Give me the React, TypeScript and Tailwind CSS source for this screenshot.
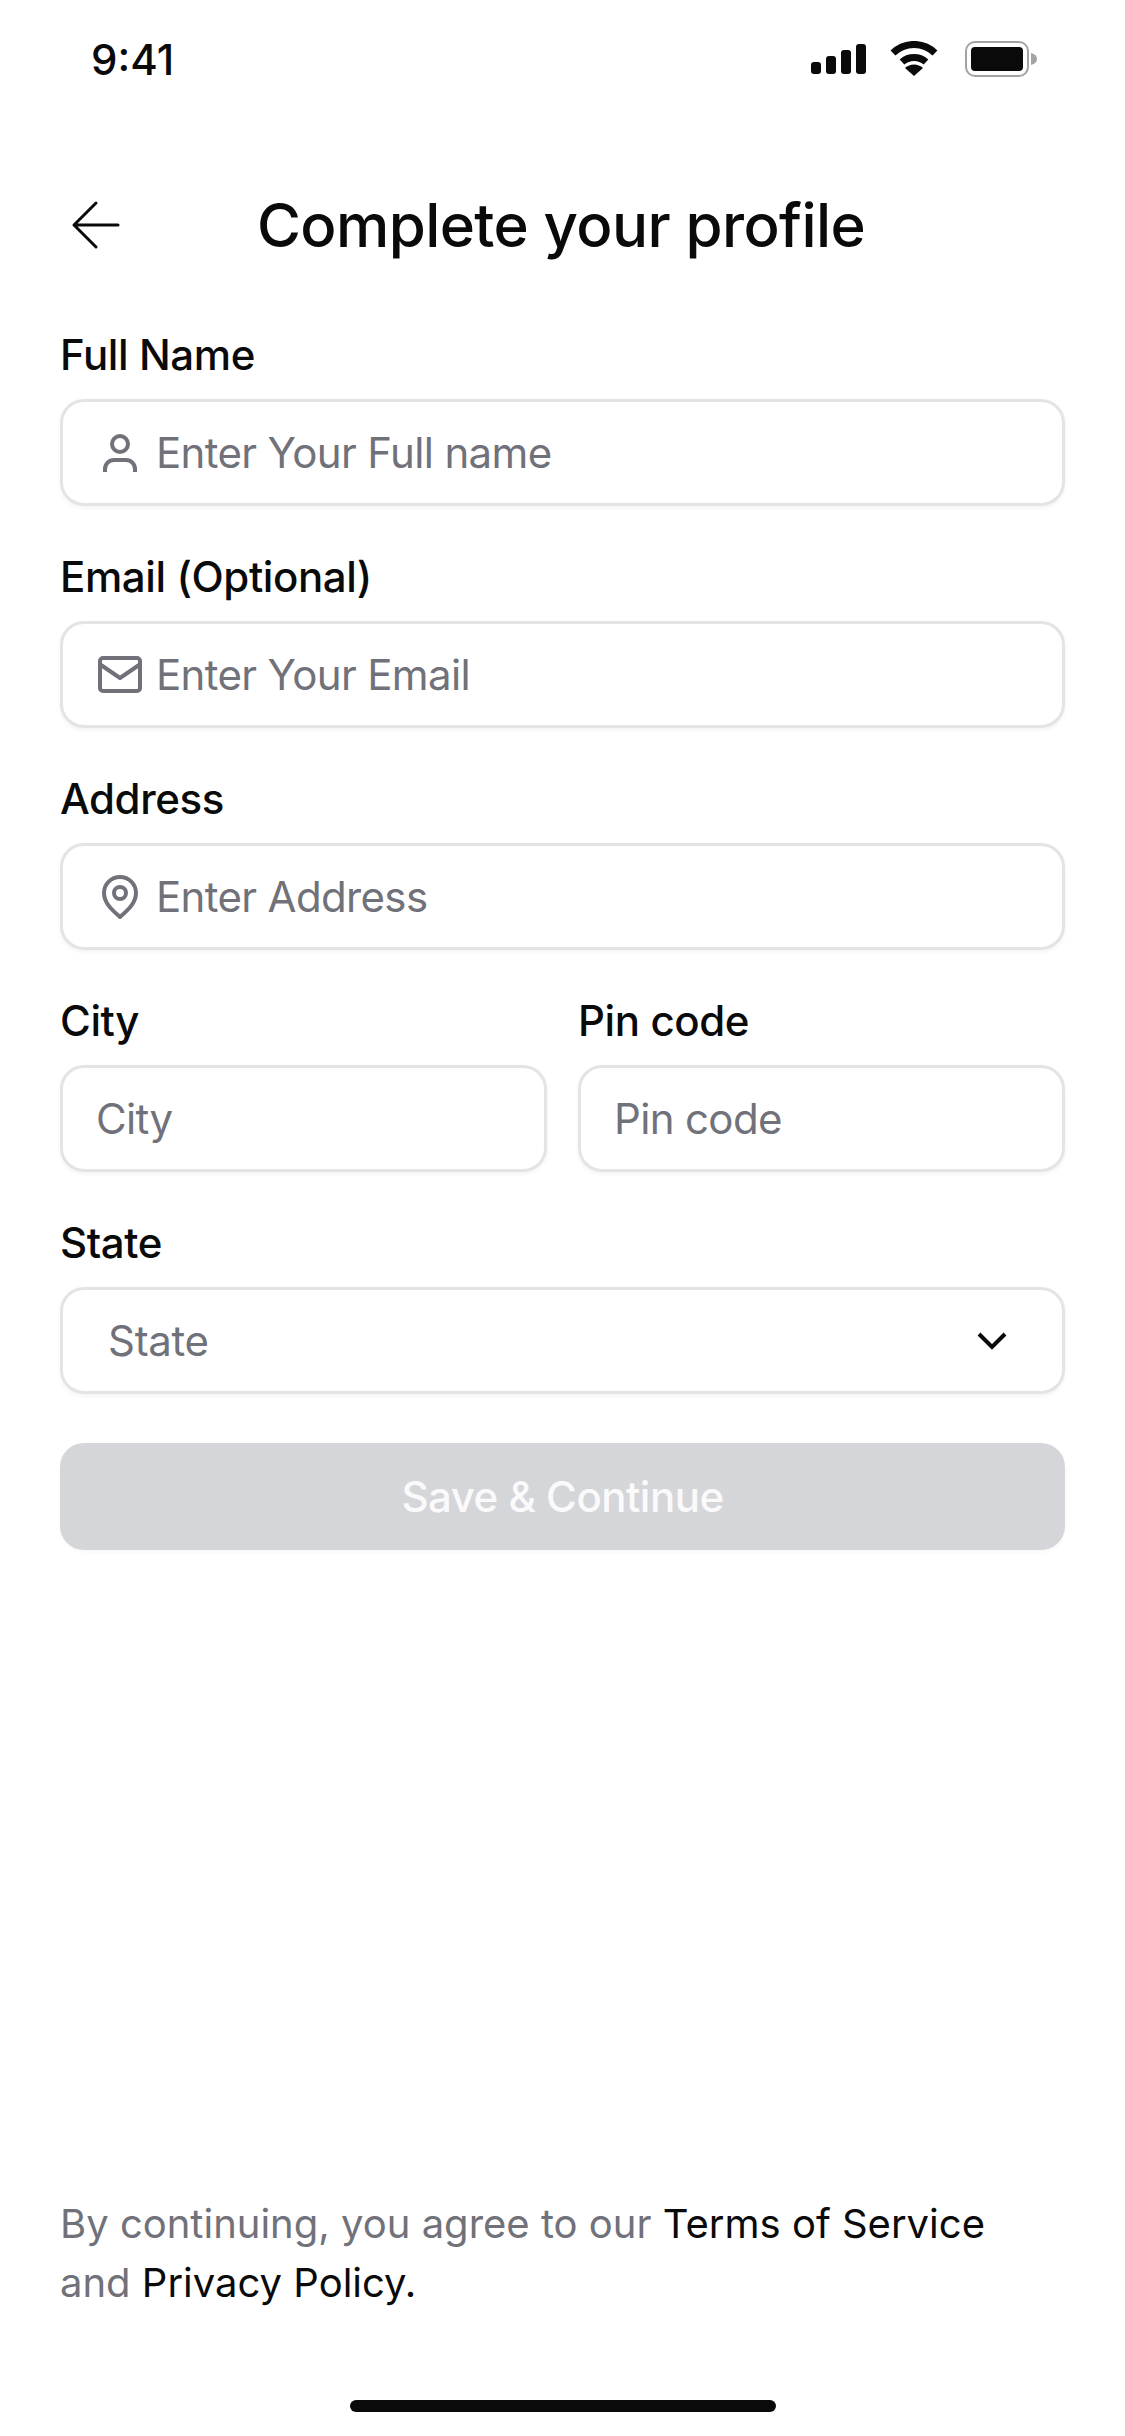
import React from 'react';

const GRAY = '#71717a';

const UserIcon = () => (
  <svg width="44" height="44" viewBox="0 0 44 44" fill="none" stroke={GRAY} strokeWidth="4">
    <circle cx="22" cy="13" r="8" />
    <path d="M7 41v-3a9 9 0 0 1 9-9h12a9 9 0 0 1 9 9v3" />
  </svg>
);

const MailIcon = () => (
  <svg width="44" height="44" viewBox="0 0 44 44" fill="none" stroke={GRAY} strokeWidth="4" strokeLinejoin="round">
    <rect x="2" y="5" width="40" height="33" rx="3" />
    <path d="M3 12l19 13 19-13" />
  </svg>
);

const PinIcon = () => (
  <svg width="44" height="44" viewBox="0 0 44 44" fill="none" stroke={GRAY} strokeWidth="4">
    <path d="M22 42C14 35 6 28 6 18a16 16 0 0 1 32 0c0 10-8 17-16 24z" strokeLinejoin="round" />
    <circle cx="22" cy="18" r="6" />
  </svg>
);

const Label = ({ children }: { children: React.ReactNode }) => (
  <div className="h-[50px] text-[42px] leading-[50px] font-medium tracking-[-0.4px] text-[#0a0a0a]">{children}</div>
);

const Field = ({ label, placeholder, icon }: { label: string; placeholder: string; icon?: React.ReactNode }) => (
  <div className="flex min-w-0 flex-1 flex-col gap-[19px]">
    <Label>{label}</Label>
    <div className={`flex h-[107px] items-center gap-[14px] rounded-[24px] border-[3px] border-[#e4e4e7] bg-white shadow-[0_2px_4px_rgba(0,0,0,0.05)] ${icon ? 'pl-[35px]' : 'pl-[33px]'}`}>
      {icon}
      <span className="text-[42px] tracking-[-0.65px] text-[#71717a]">{placeholder}</span>
    </div>
  </div>
);

export default function App() {
  return (
    <div className="flex h-[2436px] w-[1125px] flex-col bg-white font-['Inter',sans-serif] text-[#0a0a0a]">
      {/* status bar */}
      <div className="flex h-[118px] items-center justify-between pl-[91px] pr-[88px]">
        <span className="text-[42px] font-medium">9:41</span>
        <div className="flex items-center">
          <svg className="mr-[24px]" width="55" height="30" viewBox="0 0 55 30" fill="#0a0a0a">
            <rect x="0" y="18" width="10" height="12" rx="3" />
            <rect x="15" y="12" width="10" height="18" rx="3" />
            <rect x="30" y="6" width="10" height="24" rx="3" />
            <rect x="45" y="0" width="10" height="30" rx="3" />
          </svg>
          <svg className="mr-[27px]" width="48" height="36" viewBox="0 0 48 36" fill="none" stroke="#0a0a0a" strokeWidth="7">
            <path d="M3 12a30 30 0 0 1 42 0" />
            <path d="M12 21a18 18 0 0 1 24 0" />
            <path d="M24 35l-9-8a13 13 0 0 1 18 0z" fill="#0a0a0a" stroke="none" />
          </svg>
          <svg width="72" height="36" viewBox="0 0 72 36" fill="none">
            <rect x="1" y="1" width="62" height="34" rx="9" stroke="#a3a3a3" strokeWidth="2" />
            <rect x="6" y="6" width="52" height="24" rx="4" fill="#0a0a0a" />
            <path d="M66 12c4 1 6 3 6 6s-2 5-6 6z" fill="#a3a3a3" />
          </svg>
        </div>
      </div>

      {/* header */}
      <div className="relative mt-[54px] flex h-[106px] items-center justify-center pr-[3px]">
        <svg className="absolute left-[70px] top-[28px]" width="50" height="50" viewBox="0 0 50 50" fill="none" stroke="#0a0a0a" strokeWidth="3" strokeLinecap="round" strokeLinejoin="round">
          <path d="M26 3L4 25l22 22M4 25h44" />
        </svg>
        <h1 className="text-[60px] font-medium leading-none tracking-[-0.6px]">Complete your profile</h1>
      </div>

      {/* form */}
      <div className="mt-[52px] flex flex-col gap-[46px] px-[60px]">
        <Field label="Full Name" placeholder="Enter Your Full name" icon={<UserIcon />} />
        <Field label="Email (Optional)" placeholder="Enter Your Email" icon={<MailIcon />} />
        <Field label="Address" placeholder="Enter Address" icon={<PinIcon />} />
        <div className="flex gap-[31px]">
          <Field label="City" placeholder="City" />
          <Field label="Pin code" placeholder="Pin code" />
        </div>
        <div className="flex flex-col gap-[19px]">
          <Label>State</Label>
          <div className="flex h-[107px] items-center justify-between rounded-[24px] border-[3px] border-[#e4e4e7] bg-white pl-[45px] pr-[55px] shadow-[0_2px_4px_rgba(0,0,0,0.05)]">
            <span className="text-[42px] tracking-[-0.3px] text-[#71717a]">State</span>
            <svg width="30" height="20" viewBox="0 0 30 20" fill="none" stroke="#0a0a0a" strokeWidth="4">
              <path d="M2 3l13 13L28 3" />
            </svg>
          </div>
        </div>
        <button className="mt-[3px] h-[107px] rounded-[24px] bg-[#d5d6da] text-[42px] font-medium tracking-[-0.5px] text-[#fafafa] shadow-[0_2px_4px_rgba(0,0,0,0.03)]">
          Save &amp; Continue
        </button>
      </div>

      {/* footer */}
      <div className="mt-auto px-[60px] pb-[24px]">
        <p className="text-[40px] leading-[59px] text-[#71717a]">
          By continuing, you agree to our <span className="text-[#0a0a0a]">Terms of Service</span>
          <br />
          and <span className="text-[#0a0a0a]">Privacy Policy.</span>
        </p>
        <div className="mx-auto mt-[88px] h-[12px] w-[426px] rounded-full bg-[#0a0a0a]" />
      </div>
    </div>
  );
}
